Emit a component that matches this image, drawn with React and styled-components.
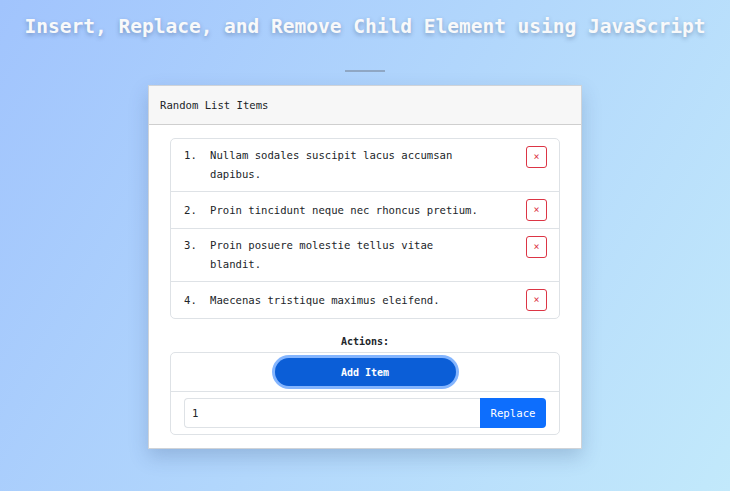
import styled, { createGlobalStyle } from "styled-components";

const GlobalStyle = createGlobalStyle`
  html, body {
    margin: 0;
    padding: 0;
  }
  body {
    min-height: 100vh;
    background: linear-gradient(120deg, #a1c4fd 0%, #c2e9fb 100%);
    font-family: "DejaVu Sans Mono", "Liberation Mono", monospace;
    color: #212529;
  }
`;

const Page = styled.div`
  display: flex;
  flex-direction: column;
  align-items: center;
  padding-top: 15px;
  padding-bottom: 40px;
`;

const Title = styled.h1`
  margin: 0;
  font-size: 19.5px;
  line-height: 24px;
  font-weight: 700;
  color: #f8f9fa;
  text-shadow: 0 2px 4px rgba(40, 60, 100, 0.35);
`;

const Rule = styled.div`
  width: 40px;
  height: 2px;
  background: #8fa7c4;
  margin: 31px 0 13px;
`;

const Card = styled.div`
  width: 432px;
  background: #fff;
  border: 1px solid #cfd3d8;
  box-shadow: 0 8px 18px rgba(40, 70, 120, 0.22);
`;

const CardHeader = styled.div`
  background: #f7f7f7;
  border-bottom: 1px solid #cfcfcf;
  padding: 0 11px;
  height: 38px;
  display: flex;
  align-items: center;
  font-size: 10.6px;
`;

const CardBody = styled.div`
  padding: 13px 21px 13px;
`;

const List = styled.ol`
  margin: 0;
  padding: 0;
  list-style: none;
  border: 1px solid #dee2e6;
  border-radius: 5px;
`;

const Item = styled.li`
  display: flex;
  align-items: flex-start;
  padding: 7px 12px 7px 13px;
  font-size: 10.6px;
  line-height: 19px;
  & + & {
    border-top: 1px solid #dee2e6;
  }
`;

const ItemBody = styled.div`
  flex: 1;
  align-self: center;
  display: flex;
  margin-right: 43px;
`;

const Num = styled.span`
  width: 26px;
  flex: none;
`;

const ItemText = styled.span`
  flex: 1;
`;

const DeleteButton = styled.button`
  flex: none;
  width: 21px;
  height: 22px;
  padding: 0;
  border: 1px solid #dc3545;
  border-radius: 3px;
  background: #fff;
  color: #dc3545;
  font-family: inherit;
  font-size: 10px;
  line-height: 1;
  display: flex;
  align-items: center;
  justify-content: center;
`;

const ActionsLabel = styled.div`
  text-align: center;
  font-weight: 700;
  font-size: 10px;
  line-height: 16px;
  margin: 15px 0 2px;
`;

const ActionsBox = styled.div`
  border: 1px solid #dee2e6;
  border-radius: 5px;
`;

const ActionRow = styled.div`
  display: flex;
  justify-content: center;
  padding: ${(p) => p.$pad};
  & + & {
    border-top: 1px solid #dee2e6;
  }
`;

const AddButton = styled.button`
  width: 181px;
  height: 28px;
  border: none;
  border-radius: 14px;
  background: #0b5ed7;
  color: #fff;
  font-family: inherit;
  font-weight: 700;
  font-size: 10px;
  box-shadow: 0 0 0 3px rgba(110, 168, 254, 0.85);
`;

const InputGroup = styled.div`
  display: flex;
  width: 100%;
  height: 30px;
`;

const Input = styled.input`
  flex: 1;
  min-width: 0;
  border: 1px solid #dee2e6;
  border-right: none;
  border-radius: 4px 0 0 4px;
  padding: 0 7px;
  font-family: inherit;
  font-size: 10.6px;
  color: #212529;
  outline: none;
`;

const ReplaceButton = styled.button`
  width: 66px;
  border: none;
  border-radius: 0 4px 4px 0;
  background: #0d6efd;
  color: #fff;
  font-family: inherit;
  font-size: 10.7px;
  padding: 0;
`;

const items = [
  "Nullam sodales suscipit lacus accumsan dapibus.",
  "Proin tincidunt neque nec rhoncus pretium.",
  "Proin posuere molestie tellus vitae blandit.",
  "Maecenas tristique maximus eleifend.",
];

export default function App() {
  return (
    <>
      <GlobalStyle />
      <Page>
        <Title>Insert, Replace, and Remove Child Element using JavaScript</Title>
        <Rule />
        <Card>
          <CardHeader>Random List Items</CardHeader>
          <CardBody>
            <List>
              {items.map((text, i) => (
                <Item key={i}>
                  <ItemBody>
                    <Num>{i + 1}.</Num>
                    <ItemText>{text}</ItemText>
                  </ItemBody>
                  <DeleteButton>×</DeleteButton>
                </Item>
              ))}
            </List>
            <ActionsLabel>Actions:</ActionsLabel>
            <ActionsBox>
              <ActionRow $pad="5px 0">
                <AddButton>Add Item</AddButton>
              </ActionRow>
              <ActionRow $pad="6px 13px">
                <InputGroup>
                  <Input defaultValue="1" />
                  <ReplaceButton>Replace</ReplaceButton>
                </InputGroup>
              </ActionRow>
            </ActionsBox>
          </CardBody>
        </Card>
      </Page>
    </>
  );
}
